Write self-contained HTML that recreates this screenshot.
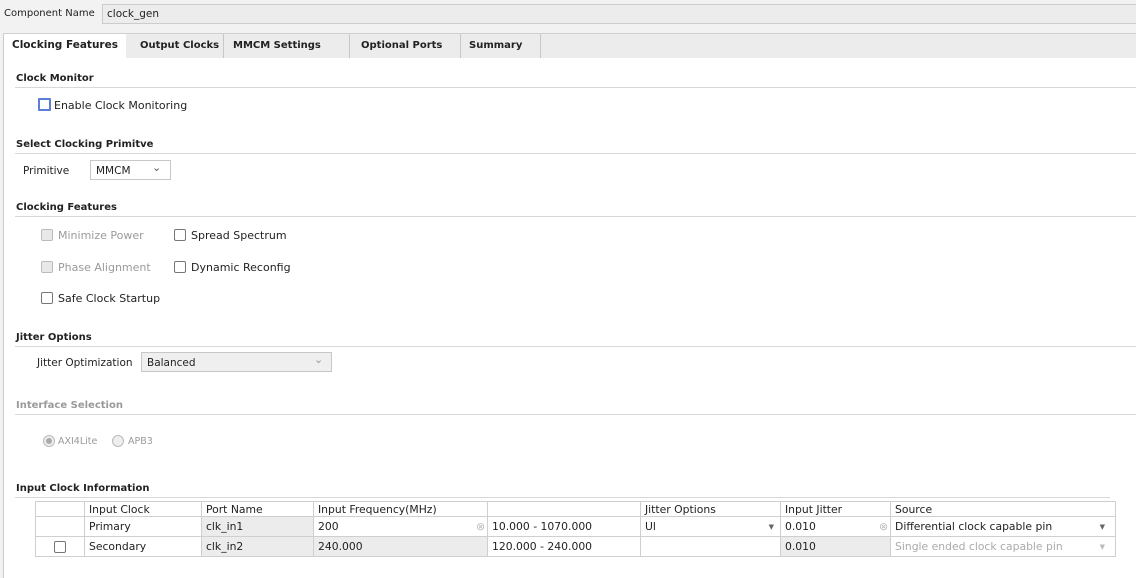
<!DOCTYPE html>
<html><head><style>
*{box-sizing:border-box;margin:0;padding:0}
body{width:1136px;height:578px;background:#f2f2f2;font-family:"DejaVu Sans","Liberation Sans",sans-serif;font-size:10.5px;color:#222;position:relative;overflow:hidden}
.a{position:absolute;white-space:nowrap}
.h{font-weight:bold;font-size:10px}
.ln{position:absolute;height:1px;background:#d8d8d8;left:15px;right:0}
.cb{position:absolute;width:12px;height:12px;border:1px solid #777;border-radius:2px;background:#fff}
.cbd{border-color:#bbb;background:#e8e8e8}
.g{color:#9a9a9a}
.l{font-size:11px}
.tab{position:absolute;top:34px;height:24px;line-height:23px;font-weight:bold;padding-left:8px;border-right:1px solid #c8c8c8;background:#ececec;white-space:nowrap;font-size:10px}
td{border:1px solid #cfcfcf;height:20px;padding:0 4px;white-space:nowrap;overflow:hidden}
table{border-collapse:collapse;position:absolute;left:35px;top:501px;font-size:10.8px;table-layout:fixed;width:1080px}
.gr{background:#ececec}
</style></head><body>
<div class="a" style="left:4px;top:8px;font-size:10px">Component Name</div>
<div class="a" style="left:102px;top:4px;width:1040px;height:20px;background:#ececec;border:1px solid #ccc;padding:3px 0 0 4px">clock_gen</div>
<div class="a" style="left:3px;top:33px;width:1133px;height:545px;background:#fff;border-left:1px solid #ccc;border-top:1px solid #d0d0d0"></div>
<div class="a" style="left:4px;top:34px;width:1132px;height:24px;background:#ececec"></div>
<div class="tab" style="left:4px;width:122px;background:#fff;border-right:none;font-size:10.5px">Clocking Features</div>
<div class="tab" style="left:126px;width:98px;padding-left:14px">Output Clocks</div>
<div class="tab" style="left:224px;width:126px;padding-left:9px">MMCM Settings</div>
<div class="tab" style="left:350px;width:111px;padding-left:11px">Optional Ports</div>
<div class="tab" style="left:461px;width:80px">Summary</div>
<div class="a" style="left:4px;top:58px;width:1132px;height:520px;background:#fff"></div>

<div class="a h" style="left:16px;top:73px">Clock Monitor</div><div class="ln" style="top:87px"></div>
<div class="cb" style="left:38px;top:98px;width:13px;height:13px;border:2px solid #5b7fd6;border-radius:1px"></div>
<div class="a l" style="left:54px;top:99px">Enable Clock Monitoring</div>

<div class="a h" style="left:16px;top:139px">Select Clocking Primitve</div><div class="ln" style="top:153px"></div>
<div class="a" style="left:23px;top:165px">Primitive</div>
<div class="a" style="left:90px;top:160px;width:81px;height:20px;border:1px solid #c8c8c8;background:#fff;padding:4px 0 0 5px">MMCM</div>
<div class="a" style="left:152px;top:161px;font-size:11px;color:#555">&#8964;</div>

<div class="a h" style="left:16px;top:202px">Clocking Features</div><div class="ln" style="top:216px"></div>
<div class="cb cbd" style="left:41px;top:229px"></div><div class="a g l" style="left:58px;top:229px">Minimize Power</div>
<div class="cb" style="left:174px;top:229px"></div><div class="a l" style="left:191px;top:229px">Spread Spectrum</div>
<div class="cb cbd" style="left:41px;top:261px"></div><div class="a g l" style="left:58px;top:261px">Phase Alignment</div>
<div class="cb" style="left:174px;top:261px"></div><div class="a l" style="left:191px;top:261px">Dynamic Reconfig</div>
<div class="cb" style="left:41px;top:292px"></div><div class="a l" style="left:58px;top:292px">Safe Clock Startup</div>

<div class="a h" style="left:16px;top:332px">Jitter Options</div><div class="ln" style="top:346px"></div>
<div class="a" style="left:37px;top:357px">Jitter Optimization</div>
<div class="a" style="left:141px;top:352px;width:191px;height:20px;border:1px solid #c8c8c8;background:#efefef;padding:4px 0 0 5px">Balanced</div>
<div class="a" style="left:314px;top:353px;font-size:11px;color:#999">&#8964;</div>

<div class="a h g" style="left:16px;top:400px">Interface Selection</div><div class="ln" style="top:414px"></div>
<div class="a" style="left:43px;top:435px;width:12px;height:12px;border-radius:50%;border:1px solid #bbb;background:#eee"><div style="width:6px;height:6px;border-radius:50%;background:#aaa;margin:2px"></div></div>
<div class="a g" style="left:58px;top:436px;font-size:9.5px">AXI4Lite</div>
<div class="a" style="left:112px;top:435px;width:12px;height:12px;border-radius:50%;border:1px solid #bbb;background:#eee"></div>
<div class="a g" style="left:128px;top:436px;font-size:9.5px">APB3</div>

<div class="a h" style="left:16px;top:483px">Input Clock Information</div><div class="ln" style="top:497px;right:26px"></div>
<table>
<colgroup><col style="width:49px"><col style="width:117px"><col style="width:112px"><col style="width:174px"><col style="width:153px"><col style="width:140px"><col style="width:110px"><col style="width:225px"></colgroup>
<tr><td style="height:15px"></td><td style="height:15px">Input Clock</td><td style="height:15px">Port Name</td><td style="height:15px">Input Frequency(MHz)</td><td style="height:15px"></td><td style="height:15px">Jitter Options</td><td style="height:15px">Input Jitter</td><td style="height:15px">Source</td></tr>
<tr><td></td><td>Primary</td><td class="gr">clk_in1</td><td style="position:relative">200<span style="position:absolute;right:2px;color:#bbb">&#8855;</span></td><td>10.000 - 1070.000</td><td style="position:relative">Ul<span style="position:absolute;right:6px;font-size:7px;top:6px;color:#666">&#9660;</span></td><td style="position:relative">0.010<span style="position:absolute;right:2px;color:#bbb">&#8855;</span></td><td style="position:relative">Differential clock capable pin<span style="position:absolute;right:10px;font-size:7px;top:6px;color:#666">&#9660;</span></td></tr>
<tr><td><div style="width:12px;height:12px;border:1px solid #777;border-radius:2px;margin-left:14px"></div></td><td>Secondary</td><td class="gr">clk_in2</td><td class="gr">240.000</td><td>120.000 - 240.000</td><td></td><td class="gr">0.010</td><td style="position:relative;color:#aaa">Single ended clock capable pin<span style="position:absolute;right:10px;font-size:7px;top:6px;color:#bbb">&#9660;</span></td></tr>
</table>
</body></html>
